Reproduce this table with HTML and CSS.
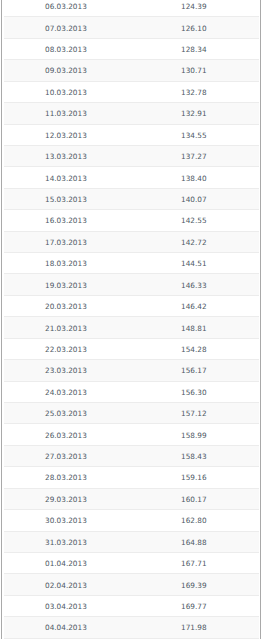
FILE: index.html
```html
<!DOCTYPE html>
<html>
<head>
<meta charset="utf-8">
<link rel="stylesheet" href="styles.css">
</head>
<body>
<div class="panel">
  <div class="table">
    <div class="row"><span class="date">06.03.2013</span><span class="val">124.39</span></div>
    <div class="row"><span class="date">07.03.2013</span><span class="val">126.10</span></div>
    <div class="row"><span class="date">08.03.2013</span><span class="val">128.34</span></div>
    <div class="row"><span class="date">09.03.2013</span><span class="val">130.71</span></div>
    <div class="row"><span class="date">10.03.2013</span><span class="val">132.78</span></div>
    <div class="row"><span class="date">11.03.2013</span><span class="val">132.91</span></div>
    <div class="row"><span class="date">12.03.2013</span><span class="val">134.55</span></div>
    <div class="row"><span class="date">13.03.2013</span><span class="val">137.27</span></div>
    <div class="row"><span class="date">14.03.2013</span><span class="val">138.40</span></div>
    <div class="row"><span class="date">15.03.2013</span><span class="val">140.07</span></div>
    <div class="row"><span class="date">16.03.2013</span><span class="val">142.55</span></div>
    <div class="row"><span class="date">17.03.2013</span><span class="val">142.72</span></div>
    <div class="row"><span class="date">18.03.2013</span><span class="val">144.51</span></div>
    <div class="row"><span class="date">19.03.2013</span><span class="val">146.33</span></div>
    <div class="row"><span class="date">20.03.2013</span><span class="val">146.42</span></div>
    <div class="row"><span class="date">21.03.2013</span><span class="val">148.81</span></div>
    <div class="row"><span class="date">22.03.2013</span><span class="val">154.28</span></div>
    <div class="row"><span class="date">23.03.2013</span><span class="val">156.17</span></div>
    <div class="row"><span class="date">24.03.2013</span><span class="val">156.30</span></div>
    <div class="row"><span class="date">25.03.2013</span><span class="val">157.12</span></div>
    <div class="row"><span class="date">26.03.2013</span><span class="val">158.99</span></div>
    <div class="row"><span class="date">27.03.2013</span><span class="val">158.43</span></div>
    <div class="row"><span class="date">28.03.2013</span><span class="val">159.16</span></div>
    <div class="row"><span class="date">29.03.2013</span><span class="val">160.17</span></div>
    <div class="row"><span class="date">30.03.2013</span><span class="val">162.80</span></div>
    <div class="row"><span class="date">31.03.2013</span><span class="val">164.88</span></div>
    <div class="row"><span class="date">01.04.2013</span><span class="val">167.71</span></div>
    <div class="row"><span class="date">02.04.2013</span><span class="val">169.39</span></div>
    <div class="row"><span class="date">03.04.2013</span><span class="val">169.77</span></div>
    <div class="row"><span class="date">04.04.2013</span><span class="val">171.98</span></div>
  </div>
</div>
</body>
</html>
```

FILE: styles.css
```css
html, body {
  margin: 0;
  padding: 0;
  background: #ffffff;
}
body {
  overflow: hidden;
  height: 640px;
}
.panel {
  margin: -4px 0 0 1px;
  width: 260px;
  box-sizing: border-box;
  border-left: 1px solid #a9a9a9;
  border-right: 1px solid #a9a9a9;
  padding: 0 1px 0 2px;
}
.table {
  display: flex;
  flex-direction: column;
  font-family: "DejaVu Sans", Verdana, sans-serif;
  font-size: 7.3px;
  color: #4d5864;
}
.row {
  display: flex;
  align-items: center;
  height: 21.43px;
  box-sizing: border-box;
  border-bottom: 1px solid #ececec;
  padding-top: 1px;
}
.row:nth-child(even) {
  background: #f9f9f9;
}
.date {
  width: 177px;
  padding-left: 41px;
  box-sizing: border-box;
}
.val {
  flex: 1;
}
```
